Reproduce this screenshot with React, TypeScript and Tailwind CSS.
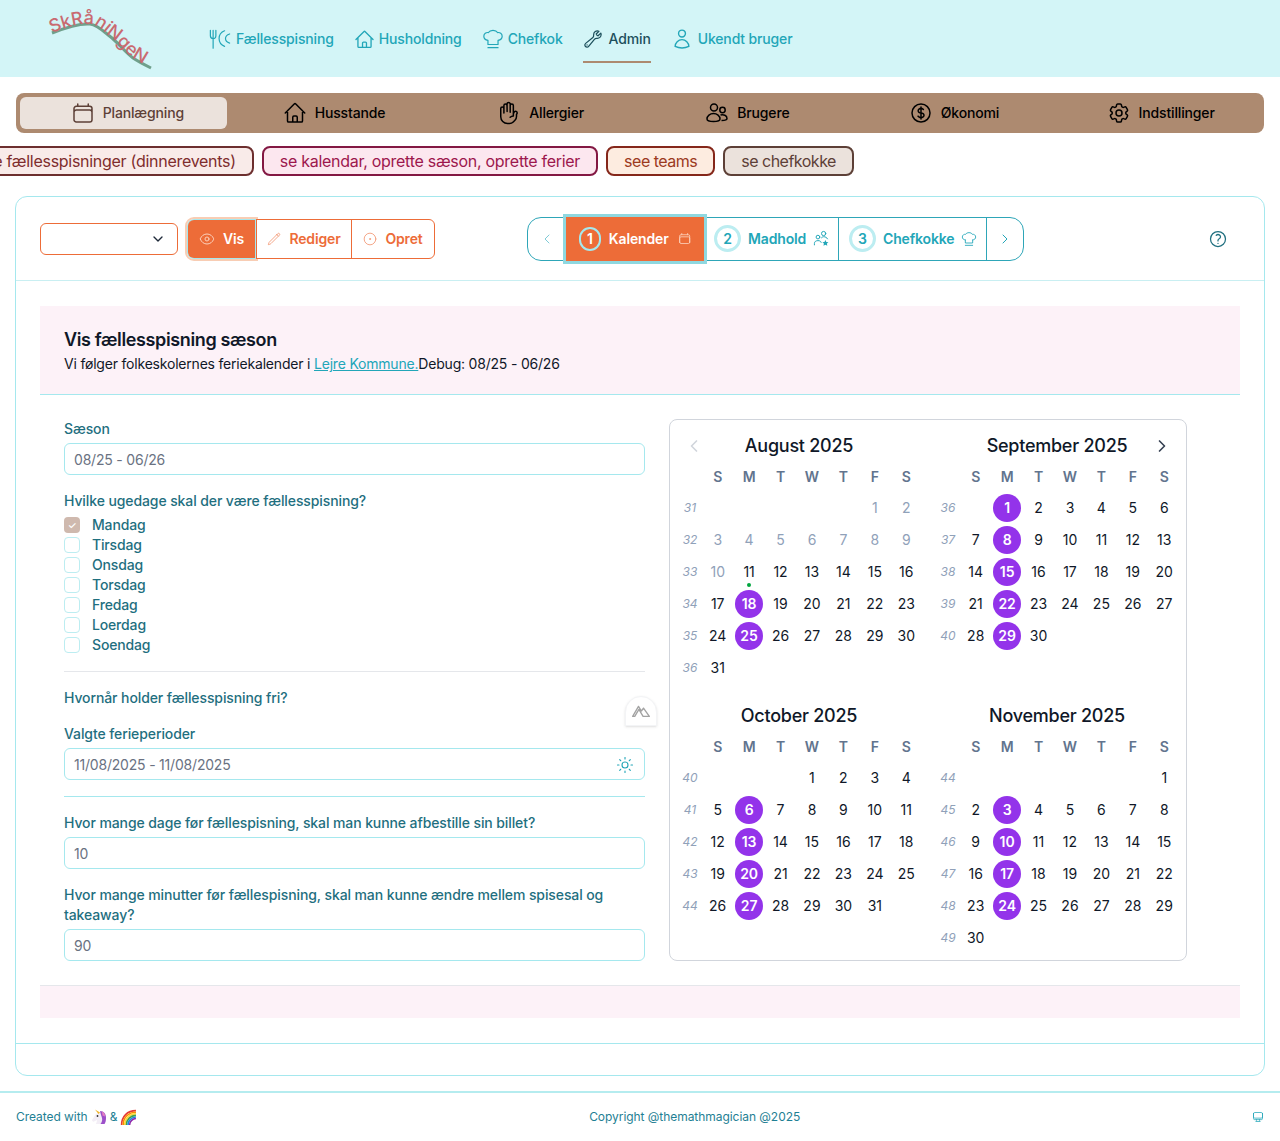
import {
  ChevronDown,
  ChevronLeft,
  ChevronRight,
  CircleDot,
  Sun,
} from "lucide-react";
import {
  HiOutlineCalendar,
  HiOutlineCog6Tooth,
  HiOutlineComputerDesktop,
  HiOutlineCurrencyDollar,
  HiOutlineEye,
  HiOutlineHandRaised,
  HiOutlineHome,
  HiOutlinePencil,
  HiOutlineQuestionMarkCircle,
  HiOutlineUser,
  HiOutlineWrench,
} from "react-icons/hi2";

const ForkIcon = () => (
  <svg viewBox="0 0 24 24" className="w-[22px] h-[22px]" fill="none" stroke="currentColor" strokeWidth="1.3" strokeLinecap="round">
    <path d="M1.500 2.500v6c0 2 1.200 3 3 3s3-1 3-3v-6M4.500 2.500V22" />
    <path d="M17 3c-4 1.500-6 4.500-6 8.500s2 7 6 8.500" />
    <path d="M22.500 6.500c-2.800.8-4.500 2.600-4.500 5s1.700 4.200 4.500 5" />
  </svg>
);

const HatIcon = ({ size }: { size: number }) => (
  <svg viewBox="0 0 24 24" width={size} height={size} fill="none" stroke="currentColor" strokeWidth="1.3" strokeLinecap="round" strokeLinejoin="round">
    <path d="M6.500 13.500V18h11v-4.500M6.500 13.500C3.500 13 2 11.500 2 9c0-2.800 2.500-4.500 5-4 1-1.800 2.800-2.500 5-2.500s4 .7 5 2.500c2.500-.5 5 1.200 5 4 0 2.500-1.500 4-4.500 4.500" />
    <path d="M6.500 21.500h11" />
  </svg>
);

const PeopleIcon = () => (
  <svg viewBox="0 0 24 24" className="w-[17px] h-[17px]" fill="none" stroke="currentColor" strokeWidth="1.4" strokeLinecap="round">
    <circle cx="15" cy="5" r="3" />
    <circle cx="7" cy="10" r="2.600" />
    <path d="M2 21v-2c0-2.500 2-4 5-4s4 1 4.500 2.500" />
    <path d="M12 11c1-1 2-1.500 3-1.500 2.500 0 4.500 1 5.500 3" />
    <path d="M17.500 14l1.300 2.800 3 .4-2.200 2 .6 3-2.700-1.500-2.700 1.500.6-3-2.200-2 3-.4z" fill="currentColor" stroke="none" />
  </svg>
);

const UsersIcon = () => (
  <svg viewBox="0 0 24 24" className="w-[24px] h-[24px]" fill="none" stroke="currentColor" strokeWidth="1.5">
    <circle cx="9" cy="6.500" r="3.500" />
    <circle cx="17.500" cy="9" r="2.700" />
    <path d="M2 18c0-3 3-5.500 6.500-5.500s6.500 2.500 6.500 5.500c0 2-3 2.500-6.500 2.500S2 20 2 18z" />
    <path d="M15.500 14c3-1 6.500.5 6.500 3.500 0 1.500-2 2-5.500 2" />
  </svg>
);

const MountainIcon = () => (
  <svg viewBox="0 0 24 24" className="w-[20px] h-[20px] text-[#a3a3a3]" fill="none" stroke="currentColor" strokeWidth="1.6" strokeLinejoin="round">
    <path d="M2 18.500 9 6.500l3.500 5.500L15 8.500l7 10h-7.500L9.500 10 4.500 18.500z" />
  </svg>
);

const Unicorn = () => (
  <svg viewBox="0 0 16 16" className="w-[16px] h-[16px]">
    <path d="M10 3C6 3 4 6 3 8L1 11c0 1 1 2 2 1.500L6 11c0 2-1 3-1 4h8c2-3 2-9-3-12z" fill="#f3eef6" />
    <path d="M9 2c4 0 6 3 6 7 0 2.500-.5 4.500-1.500 6H9.500c1.500-2 2-4 1.500-6-.4-2-1.500-4-2-7z" fill="#9c4fc9" />
    <path d="M11 2.500c2 .5 3 2.500 3 5l-2.500-1z" fill="#e77fc0" />
    <path d="M7.500 5 4 .5 9 3.500z" fill="#f0b429" />
    <circle cx="6.500" cy="7" r=".9" fill="#333" />
  </svg>
);

const Rainbow = () => (
  <svg viewBox="0 0 16 16" className="w-[17px] h-[17px]" fill="none" strokeWidth="1.500">
    <path d="M1.500 15C1.500 7 7 1.500 15 1.500" stroke="#e53935" />
    <path d="M3 15C3 8 8 3 15 3" stroke="#fb8c00" />
    <path d="M4.500 15c0-6 4.500-10.500 10.500-10.500" stroke="#fdd835" />
    <path d="M6 15c0-5 4-9 9-9" stroke="#43a047" />
    <path d="M7.500 15c0-4 3.500-7.500 7.500-7.500" stroke="#1e88e5" />
    <path d="M9 15c0-3 3-6 6-6" stroke="#8e24aa" />
  </svg>
);

const Logo = () => (
  <svg viewBox="0 0 110 70" className="w-[110px] h-[70px]">
    <path id="hill" d="M6 29C16 25 32 19 44 20c8 1 14 8 22 14 8 7 14 15 21 20 6 4 12 7 18 10" fill="none" stroke="#6fa08c" strokeWidth="3" />
    <text fontFamily="Inter, sans-serif" fontSize="18" fontWeight="500" fill="#c96a70">
      <textPath href="#hill" startOffset="0">SkRåniNgeN</textPath>
    </text>
  </svg>
);

const navItems = [
  { label: "Fællesspisning", icon: <ForkIcon />, gap: "gap-[5px]" },
  { label: "Husholdning", icon: <HiOutlineHome size={21} />, gap: "gap-[4px]" },
  { label: "Chefkok", icon: <HatIcon size={22} />, gap: "gap-[4px]" },
  { label: "Admin", icon: <HiOutlineWrench size={20} />, active: true, gap: "gap-[6px]" },
  { label: "Ukendt bruger", icon: <HiOutlineUser size={22} />, gap: "gap-[5px]" },
];

const tabs = [
  { label: "Planlægning", icon: <HiOutlineCalendar size={24} />, active: true },
  { label: "Husstande", icon: <HiOutlineHome size={24} /> },
  { label: "Allergier", icon: <HiOutlineHandRaised size={24} /> },
  { label: "Brugere", icon: <UsersIcon /> },
  { label: "Økonomi", icon: <HiOutlineCurrencyDollar size={24} /> },
  { label: "Indstillinger", icon: <HiOutlineCog6Tooth size={24} /> },
];

const weekdays = ["Mandag", "Tirsdag", "Onsdag", "Torsdag", "Fredag", "Loerdag", "Soendag"];

const months = [
  { title: "August 2025", offset: 5, days: 31, week: 31, selected: [18, 25], mutedTo: 10, prev: true },
  { title: "September 2025", offset: 1, days: 30, week: 36, selected: [1, 8, 15, 22, 29], next: true },
  { title: "October 2025", offset: 3, days: 31, week: 40, selected: [6, 13, 20, 27] },
  { title: "November 2025", offset: 6, days: 30, week: 44, selected: [3, 10, 17, 24] },
];

type MonthProps = (typeof months)[number] & { mutedTo?: number; prev?: boolean; next?: boolean };

const Month = ({ title, offset, days, week, selected, mutedTo, prev, next }: MonthProps) => {
  const cells: (number | null)[] = [...Array(offset).fill(null)];
  for (let d = 1; d <= days; d++) cells.push(d);
  const rows: (number | null)[][] = [];
  for (let i = 0; i < cells.length; i += 7) rows.push(cells.slice(i, i + 7));

  return (
    <div className="w-[244px] tracking-normal">
      <div className="h-[32px] pt-px flex items-center">
        <div className="w-[31px] flex justify-center">
          {prev && <ChevronLeft size={20} className="text-gray-300" />}
        </div>
        <div className="flex-1 text-center text-[18px] leading-7 font-medium tracking-[-0.25px] text-gray-900">{title}</div>
        <div className="w-[33px] flex justify-center">
          {next && <ChevronRight size={20} className="text-gray-700 -ml-[3px]" />}
        </div>
      </div>
      <div className="flex h-[31px] items-center">
        <div className="w-[24px]" />
        {["S", "M", "T", "W", "T", "F", "S"].map((d, i) => (
          <div key={i} className="flex-1 text-center text-sm font-semibold text-slate-500">{d}</div>
        ))}
      </div>
      {rows.map((row, r) => (
        <div key={r} className="flex h-[32px] items-center">
          <div className="w-[24px] text-center text-xs italic text-slate-400">{week + r}</div>
          {Array.from({ length: 7 }).map((_, i) => {
            const d = row[i];
            const isSelected = d != null && selected.includes(d);
            return (
              <div key={i} className="flex-1 flex justify-center">
                {d != null && (
                  <div
                    className={
                      isSelected
                        ? "relative w-[28px] h-[28px] rounded-full bg-[#9333ea] text-white font-semibold text-sm flex items-center justify-center"
                        : mutedTo && d <= mutedTo
                          ? "relative w-[28px] h-[28px] text-slate-400 text-sm flex items-center justify-center"
                          : "relative w-[28px] h-[28px] text-gray-900 text-sm flex items-center justify-center"
                    }
                  >
                    {d}
                    {title === "August 2025" && d === 11 && (
                      <span className="absolute bottom-[-1px] w-[4px] h-[4px] rounded-full bg-green-600" />
                    )}
                  </div>
                )}
              </div>
            );
          })}
        </div>
      ))}
    </div>
  );
};

const Field = ({ value, icon }: { value: string; icon?: React.ReactNode }) => (
  <div className="mt-1 h-[32px] rounded-md border border-[#a5e8ee] pl-[9px] pr-[10px] pt-px flex items-center justify-between text-sm tracking-[-0.2px] text-gray-500">
    <span>{value}</span>
    {icon}
  </div>
);

const Label = ({ children, className = "" }: { children: React.ReactNode; className?: string }) => (
  <div className={"text-sm font-medium tracking-[-0.1px] text-[#1f6f7f] " + className}>{children}</div>
);

export default function App() {
  return (
    <div className="min-h-[1141px] bg-white overflow-hidden tracking-[-0.15px] font-['Inter',sans-serif]">
      <header className="h-[77px] bg-[#d3f5f7] flex">
        <div className="w-[209px] pl-[46px] pt-[4px]">
          <Logo />
        </div>
        <nav className="flex gap-[20px] h-[63px]">
          {navItems.map((n) => (
            <div
              key={n.label}
              className={
                n.active
                  ? "flex items-center text-sm font-medium text-[#1d4f5c] border-b-2 border-[#ad8a70] pt-[17px] " + n.gap
                  : "flex items-center text-sm font-medium text-[#22a6b8] pt-[15px] " + n.gap
              }
            >
              {n.icon}
              <span>{n.label}</span>
            </div>
          ))}
        </nav>
      </header>

      <main className="px-4 pt-4">
        <div className="h-10 bg-[#ad8a70] rounded-lg p-1 grid grid-cols-6">
          {tabs.map((t) => (
            <div
              key={t.label}
              className={
                t.active
                  ? "flex items-center justify-center gap-2 pl-2 rounded-md bg-[#ebe2dc] text-sm font-medium text-[#5d4037]"
                  : "flex items-center justify-center gap-2 pl-2 text-sm font-medium text-black"
              }
            >
              {t.icon}
              <span>{t.label}</span>
            </div>
          ))}
        </div>

        <div className="mt-[13px] flex gap-2 -ml-[49px] tracking-[-0.28px]">
          <div className="shrink-0 h-[30px] px-4 flex items-center rounded-lg border-2 border-[#6d2f2f] bg-[#f9ebe9] text-[#7f2d2d]">
            se fællesspisninger (dinnerevents)
          </div>
          <div className="shrink-0 h-[30px] px-4 flex items-center rounded-lg border-2 border-[#831843] bg-[#fce7ef] text-[#9d174d]">
            se kalendar, oprette sæson, oprette ferier
          </div>
          <div className="shrink-0 h-[30px] px-4 flex items-center rounded-lg border-2 border-[#85271a] bg-[#fdece0] text-[#9c3a1e] tracking-[-0.5px]">
            see teams
          </div>
          <div className="shrink-0 h-[30px] px-4 flex items-center rounded-lg border-2 border-[#5d4037] bg-[#ebe2dc] text-[#5d4037] tracking-[-0.5px]">
            se chefkokke
          </div>
        </div>

        <section className="mt-5 -mx-px rounded-xl border border-[#a5e8ee]">
          <div className="h-[84px] px-6 flex items-center border-b border-[#c9eff2]">
            <div className="w-[138px] h-[32px] rounded-md border border-[#ed6c38] flex items-center justify-end pr-[11px]">
              <ChevronDown size={16} className="text-gray-800" />
            </div>
            <div className="ml-[10px] flex items-center text-sm font-semibold text-[#ed6c38]">
              <div className="h-[38px] w-[67px] rounded-l-md bg-[#ed6c38] text-white ring-1 ring-[#a5e8ee] outline-2 outline-offset-1 outline-[#f8cdb4] flex items-center justify-center gap-2">
                <HiOutlineEye size={16} className="text-[#fbd0bb]" />
                Vis
              </div>
              <div className="relative ml-px h-[40px] w-[96px] bg-white border border-[#ed6c38] flex items-center justify-center gap-2">
                <HiOutlinePencil size={14} className="text-[#f29a78]" />
                Rediger
              </div>
              <div className="h-[40px] w-[84px] -ml-px rounded-r-md border border-[#ed6c38] flex items-center justify-center gap-2">
                <CircleDot size={14} strokeWidth={1.5} className="text-[#f29a78]" />
                Opret
              </div>
            </div>

            <div className="ml-[92px] h-[44px] w-[497px] flex items-center rounded-[14px] border border-[#2ea6b8] text-sm font-semibold text-[#22a6b8]">
              <div className="w-[38px] flex justify-center">
                <ChevronLeft size={16} strokeWidth={1.5} className="text-[#7fcbd7]" />
              </div>
              <div className="h-[44px] w-[138px] bg-[#ed6c38] text-white outline-3 outline-[#8fd8e0] flex items-center gap-2 px-[13px]">
                <span className="w-[24px] h-[24px] rounded-full border-2 border-[#a5e8ee] flex items-center justify-center">1</span>
                Kalender
                <HiOutlineCalendar size={15} className="ml-[1px] text-[#fbd0bb]" />
              </div>
              <div className="h-[44px] w-[135px] border-r border-[#2ea6b8] flex items-center gap-[7px] pl-[10px]">
                <span className="w-[27px] h-[27px] rounded-full border-[3px] border-[#bcedf1] flex items-center justify-center">2</span>
                Madhold
                <PeopleIcon />
              </div>
              <div className="h-[44px] w-[148px] border-r border-[#2ea6b8] flex items-center gap-[7px] pl-[10px]">
                <span className="w-[27px] h-[27px] rounded-full border-[3px] border-[#bcedf1] flex items-center justify-center">3</span>
                Chefkokke
                <HatIcon size={16} />
              </div>
              <div className="flex-1 flex justify-center">
                <ChevronRight size={16} strokeWidth={1.5} className="text-[#22a6b8]" />
              </div>
            </div>

            <HiOutlineQuestionMarkCircle size={20} className="ml-auto mr-[12px] text-[#1f6f7f]" />
          </div>

          <div className="px-6 pt-[25px] pb-[25px]">
            <div className="h-[89px] bg-[#fdf2f8] border-b border-[#a5e8ee] px-6 pt-6">
              <h2 className="text-lg leading-[20px] font-semibold tracking-[-0.37px] text-gray-900">Vis fællesspisning sæson</h2>
              <p className="mt-[4px] text-sm tracking-[-0.2px] text-gray-900">
                Vi følger folkeskolernes feriekalender i{" "}
                <span className="underline text-[#22a6b8]">Lejre Kommune.</span>Debug: 08/25 - 06/26
              </p>
            </div>

            <div className="pt-6 px-6 flex gap-6">
              <div className="w-[581px] shrink-0">
                <Label>Sæson</Label>
                <Field value="08/25 - 06/26" />

                <Label className="mt-4">Hvilke ugedage skal der være fællesspisning?</Label>
                <div className="mt-1">
                  {weekdays.map((d, i) => (
                    <div key={d} className="h-5 flex items-center gap-3 text-sm font-medium tracking-[-0.16px] text-[#1f6f7f]">
                      {i === 0 ? (
                        <span className="w-4 h-4 rounded bg-[#cfb9ae] text-white text-[10px] flex items-center justify-center">✓</span>
                      ) : (
                        <span className="w-4 h-4 rounded border border-[#bcedf1]" />
                      )}
                      {d}
                    </div>
                  ))}
                </div>

                <div className="mt-4 border-t border-gray-200" />
                <Label className="mt-4">Hvornår holder fællesspisning fri?</Label>
                <Label className="mt-4">Valgte ferieperioder</Label>
                <Field value="11/08/2025 - 11/08/2025" icon={<Sun size={18} strokeWidth={1.5} className="text-[#22a6b8]" />} />

                <div className="mt-4 border-t border-[#a5e8ee]" />
                <Label className="mt-4">Hvor mange dage før fællespisning, skal man kunne afbestille sin billet?</Label>
                <Field value="10" />
                <Label className="mt-4">Hvor mange minutter før fællespisning, skal man kunne ændre mellem spisesal og takeaway?</Label>
                <Field value="90" />
              </div>

              <div className="relative w-[518px] h-[542px] rounded-lg border border-gray-300 pt-[9px] pl-[8px]">
                <div className="grid grid-cols-[244px_244px] gap-x-[14px] gap-y-[15px]">
                  {months.map((m) => (
                    <Month key={m.title} {...m} />
                  ))}
                </div>
                <div className="absolute -left-[45px] top-[276px] w-[32px] h-[30px] rounded-t-full bg-white border border-gray-100 shadow-sm flex items-center justify-center">
                  <MountainIcon />
                </div>
              </div>
            </div>

            <div className="mt-6 h-[33px] bg-[#fdf2f8] border-t border-gray-200" />
          </div>

          <div className="h-[32px] border-t border-[#a5e8ee]" />
        </section>
      </main>

      <footer className="mt-[15px] h-[49px] border-t-2 border-[#b5ecef] px-4 pt-[15px] flex justify-between text-xs tracking-[-0.05px] text-[#1f7f94]">
        <div className="flex items-center gap-[3px] h-[18px]">
          Created with <Unicorn /> & <Rainbow />
        </div>
        <div className="h-[18px] flex items-center">Copyright @themathmagician @2025</div>
        <div className="h-[18px] flex items-center">
          <HiOutlineComputerDesktop size={12} className="text-[#22a6b8]" />
        </div>
      </footer>
    </div>
  );
}
